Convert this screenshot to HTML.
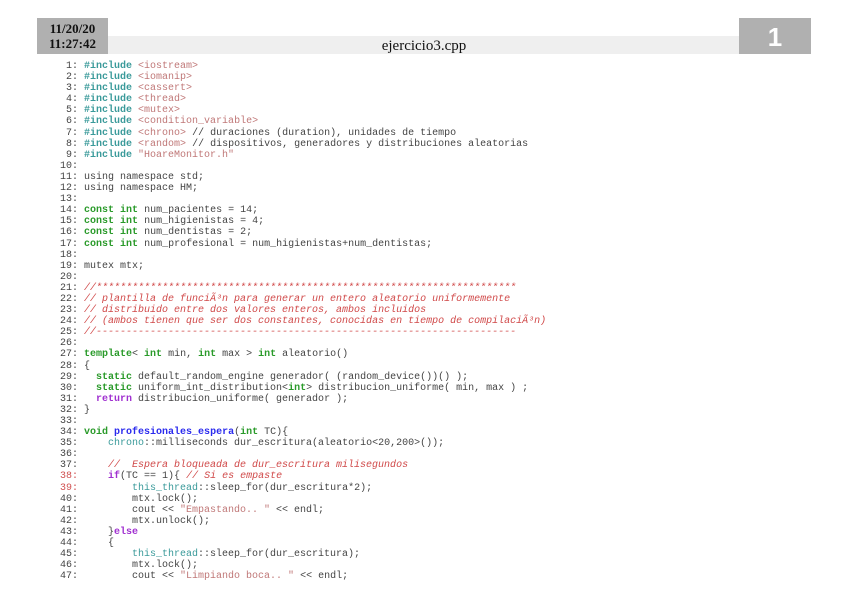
<!DOCTYPE html>
<html><head><meta charset="utf-8"><style>
body{margin:0;width:848px;height:599px;background:#fff;position:relative;overflow:hidden}
.dt{position:absolute;left:37px;top:18px;width:71px;height:36px;background:#b0b0b0;font:bold 13px "Liberation Serif",serif;text-align:center;line-height:15px;padding-top:3px;box-sizing:border-box;color:#111}
.bar{position:absolute;left:108px;top:36px;width:631px;height:18px;background:#efefef}
.fn{position:absolute;left:0;width:848px;top:36px;text-align:center;font:15px "Liberation Serif",serif;color:#111;line-height:20px}
.pg{position:absolute;left:739px;top:18px;width:72px;height:36px;background:#b0b0b0;color:#fff;font:bold 26px "Liberation Sans",sans-serif;text-align:center;line-height:38px}
pre{position:absolute;left:60px;top:61px;margin:0;font:10px/11.087px "Liberation Mono",monospace;color:#444}
.i{color:#3a9a9a;font-weight:bold}.s{color:#c07878}.k{color:#2a9a2a;font-weight:bold}.c{color:#d04848;font-style:italic}.p{color:#a030d0;font-weight:bold}.f{color:#2a2aee;font-weight:bold}.t{color:#3a9a9a}.r{color:#d05050}
</style></head><body>
<div class="dt">11/20/20<br>11:27:42</div>
<div class="bar"></div><div class="fn">ejercicio3.cpp</div>
<div class="pg">1</div>
<pre> 1: <span class="i">#include</span> <span class="s">&lt;iostream&gt;</span>
 2: <span class="i">#include</span> <span class="s">&lt;iomanip&gt;</span>
 3: <span class="i">#include</span> <span class="s">&lt;cassert&gt;</span>
 4: <span class="i">#include</span> <span class="s">&lt;thread&gt;</span>
 5: <span class="i">#include</span> <span class="s">&lt;mutex&gt;</span>
 6: <span class="i">#include</span> <span class="s">&lt;condition_variable&gt;</span>
 7: <span class="i">#include</span> <span class="s">&lt;chrono&gt;</span> // duraciones (duration), unidades de tiempo
 8: <span class="i">#include</span> <span class="s">&lt;random&gt;</span> // dispositivos, generadores y distribuciones aleatorias
 9: <span class="i">#include</span> <span class="s">"HoareMonitor.h"</span>
10: 
11: using namespace std;
12: using namespace HM;
13: 
14: <span class="k">const</span> <span class="k">int</span> num_pacientes = 14;
15: <span class="k">const</span> <span class="k">int</span> num_higienistas = 4;
16: <span class="k">const</span> <span class="k">int</span> num_dentistas = 2;
17: <span class="k">const</span> <span class="k">int</span> num_profesional = num_higienistas+num_dentistas;
18: 
19: mutex mtx;
20: 
21: <span class="c">//**********************************************************************</span>
22: <span class="c">// plantilla de funciÃ³n para generar un entero aleatorio uniformemente</span>
23: <span class="c">// distribuido entre dos valores enteros, ambos incluidos</span>
24: <span class="c">// (ambos tienen que ser dos constantes, conocidas en tiempo de compilaciÃ³n)</span>
25: <span class="c">//----------------------------------------------------------------------</span>
26: 
27: <span class="k">template</span>&lt; <span class="k">int</span> min, <span class="k">int</span> max &gt; <span class="k">int</span> aleatorio()
28: {
29:   <span class="k">static</span> default_random_engine generador( (random_device())() );
30:   <span class="k">static</span> uniform_int_distribution&lt;<span class="k">int</span>&gt; distribucion_uniforme( min, max ) ;
31:   <span class="p">return</span> distribucion_uniforme( generador );
32: }
33: 
34: <span class="k">void</span> <span class="f">profesionales_espera</span>(<span class="k">int</span> TC){
35:     <span class="t">chrono</span>::milliseconds dur_escritura(aleatorio&lt;20,200&gt;());
36: 
37:     <span class="c">//  Espera bloqueada de dur_escritura milisegundos</span>
<span class="r">38:</span>     <span class="p">if</span>(TC == 1){ <span class="c">// Si es empaste</span>
<span class="r">39:</span>         <span class="t">this_thread</span>::sleep_for(dur_escritura*2);
40:         mtx.lock();
41:         cout &lt;&lt; <span class="s">"Empastando.. "</span> &lt;&lt; endl;
42:         mtx.unlock();
43:     }<span class="p">else</span>
44:     {
45:         <span class="t">this_thread</span>::sleep_for(dur_escritura);
46:         mtx.lock();
47:         cout &lt;&lt; <span class="s">"Limpiando boca.. "</span> &lt;&lt; endl;
</pre>
</body></html>
